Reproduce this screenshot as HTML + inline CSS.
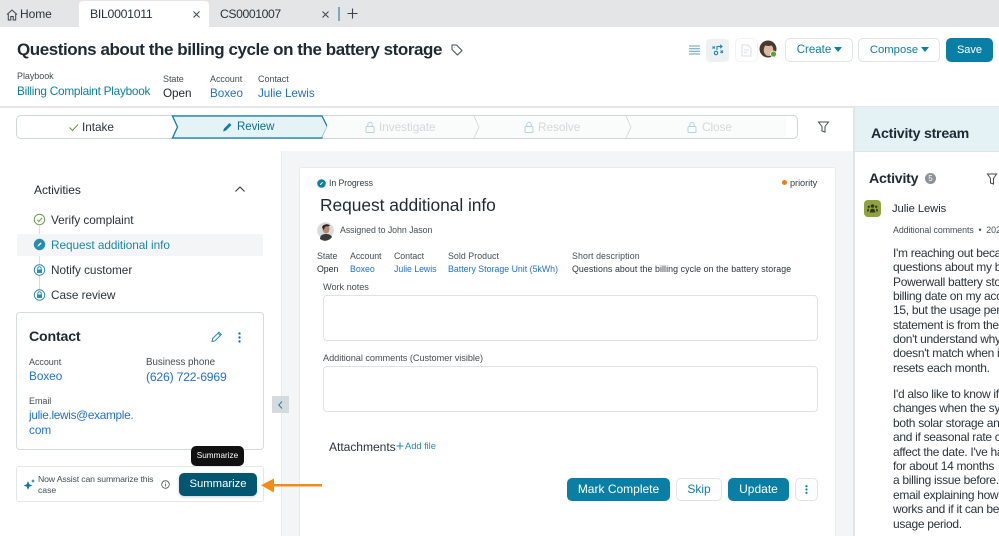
<!DOCTYPE html>
<html><head><meta charset="utf-8"><style>
html,body{margin:0;padding:0}
body{width:999px;height:536px;overflow:hidden;position:relative;background:#fff;font-family:"Liberation Sans",sans-serif;color:#1c2730}
.t{position:absolute;white-space:nowrap;line-height:1;letter-spacing:-.05px}
.b{position:absolute;box-sizing:border-box}
.l{color:#1f6fd6}.te{color:#0a7ea4}.g{color:#444d55}
.btn{position:absolute;box-sizing:border-box;border-radius:5px;text-align:center;white-space:nowrap}
.w{background:#fff;border:1px solid #dfe3e6;color:#0a7ea4}
.f{background:#0a7fa5;color:#fff}
svg{position:absolute;overflow:visible}
</style></head><body>
<div class="b" style="left:0;top:0;width:999px;height:27px;background:#e3e5e7"></div>
<div class="b" style="left:79px;top:1px;width:130px;height:26px;background:#fff;border-radius:4px 4px 0 0"></div>
<svg style="left:6px;top:9px" width="12" height="12" viewBox="0 0 12 12" fill="none" stroke="#3a444c" stroke-width="1"><path d="M1 5.500 6 1l5 4.500M2.300 5v6h2.500V7.500h2.400V11h2.500V5"/></svg>
<div class="t" style="left:20px;top:8px;font-size:12px;color:#2a343c">Home</div>
<div class="t" style="left:90px;top:8px;font-size:12.300px;color:#2a343c;letter-spacing:-.3px">BIL0001011</div>
<svg style="left:192px;top:10px" width="11" height="11" stroke="#3a444c" stroke-width="1"><path d="M1.500 1.500l6 6M7.500 1.500l-6 6"/></svg>
<div class="t" style="left:220px;top:8px;font-size:12.200px;color:#2a343c;letter-spacing:-.4px">CS0001007</div>
<svg style="left:321px;top:10px" width="11" height="11" stroke="#3a444c" stroke-width="1"><path d="M1.500 1.500l6 6M7.500 1.500l-6 6"/></svg>
<div class="b" style="left:338px;top:7px;width:1.500px;height:14px;background:#7fa9bb"></div>
<svg style="left:347px;top:8px" width="12" height="12" stroke="#3a444c" stroke-width="1.100"><path d="M5.500 .5v10M.5 5.500h10"/></svg>

<div class="t" style="left:17px;top:41px;font-size:17px;font-weight:bold;color:#1d2a33;letter-spacing:-.44px">Questions about the billing cycle on the battery storage</div>
<svg style="left:451px;top:44px" width="12" height="12" viewBox="0 0 12 12" fill="none" stroke="#444d55" stroke-width="1"><path d="M1 1h4.500L11 6.500 6.500 11 1 5.500zM3.300 3.300h.4"/></svg>

<div class="t g" style="left:17px;top:72px;font-size:9px">Playbook</div>
<div class="t te" style="left:17px;top:86px;font-size:11.800px;letter-spacing:-.25px">Billing Complaint Playbook</div>
<div class="t g" style="left:163px;top:75px;font-size:9px">State</div>
<div class="t" style="left:163px;top:88px;font-size:11.700px">Open</div>
<div class="t g" style="left:210px;top:75px;font-size:9px">Account</div>
<div class="t l" style="left:210px;top:88px;font-size:11.700px">Boxeo</div>
<div class="t g" style="left:258px;top:75px;font-size:9px">Contact</div>
<div class="t l" style="left:258px;top:88px;font-size:11.700px">Julie Lewis</div>

<svg style="left:689px;top:45px" width="11" height="10" stroke="#5f9fb8" stroke-width="1"><path d="M0 1h11M0 3.700h11M0 6.300h11M0 9h11"/></svg>
<div class="b" style="left:706px;top:39px;width:23px;height:23px;background:#eef1f2;border-radius:4px"></div>
<svg style="left:712px;top:44px" width="12" height="12" viewBox="0 0 12 12" fill="none" stroke="#1a85a8" stroke-width="1.100"><path d="M.5 2.500l2.500 2M3 2.500l-2.500 2M5 6V2.500h4M8 .8l2 1.700-2 1.700M8.500 6.500l2.500 2.500M11 6.500 8.500 9"/><circle cx="4" cy="9" r="1.700"/></svg>
<div class="b" style="left:735px;top:38px;width:23px;height:24px;border:1px solid #f2f3f4;border-radius:5px"></div>
<svg style="left:741px;top:44px" width="12" height="13" viewBox="0 0 12 13" fill="none" stroke="#e0e3e5" stroke-width="1.200"><path d="M1 1h6l3 3v8H1zM3 6h5M3 8.500h3"/></svg>
<svg style="left:759px;top:40px" width="20" height="20" viewBox="0 0 20 20"><circle cx="9" cy="9" r="8.500" fill="#4a392e"/><ellipse cx="9.500" cy="10" rx="4.800" ry="6" fill="#dcb9a2"/><path d="M4.500 6c2-3.500 8-3.500 10 0-2-1-3 0-5 0S6.500 5 4.500 6z" fill="#4a3527"/><circle cx="14.500" cy="14" r="3" fill="#56a82a" stroke="#fff" stroke-width=".8"/></svg>
<div class="btn w" style="left:785px;top:38px;width:68px;height:24px;font-size:11.500px;line-height:22px;padding-right:10px">Create</div>
<svg style="left:834px;top:47px" width="8" height="5"><path d="M0 0h8L4 5z" fill="#0a7ea4"/></svg>
<div class="btn w" style="left:858px;top:38px;width:82px;height:24px;font-size:11.300px;line-height:22px;padding-right:10px">Compose</div>
<svg style="left:921px;top:47px" width="8" height="5"><path d="M0 0h8L4 5z" fill="#0a7ea4"/></svg>
<div class="btn f" style="left:946px;top:38px;width:47px;height:24px;font-size:11px;line-height:24px">Save</div>

<div class="b" style="left:0;top:106px;width:999px;height:1.500px;background:#e4e6e8"></div>

<div class="b" style="left:16px;top:115px;width:782px;height:24px;background:#fff;border:1.500px solid #cfd4d7;border-radius:5px"></div>
<svg style="left:0;top:0" width="999" height="145" fill="none">
<path d="M172.500 116 H322 L327.500 127 L322 138 H172.500 L177.500 127Z" fill="#e5f2f6" stroke="#0f7ea3" stroke-width="1.300"/>
<path d="M328 116.500h146l5 10.500-5 10.500H322l5-10.500z" fill="#fafbfb" stroke="none"/>
<path d="M479 116.500H626l5 10.500-5 10.500H474l5-10.500z" fill="#fafbfb"/>
<path d="M631 116.500H786v21H626l5-10.500z" fill="#fafbfb"/>
<path d="M474 116l5 11-5 11M626 116l5 11-5 11" stroke="#d9dcdf" stroke-width="1"/>
<path d="M69.500 127.500l3 3 5.500-6" stroke="#5d9a3c" stroke-width="1"/>
<path d="M223 131.500l1-3 5.500-5.500 2 2-5.500 5.500z" fill="#0f7ea3"/>
<g stroke="#b4d3e0" stroke-width="1"><rect x="366" y="126.500" width="8" height="6" rx="1"/><path d="M367.800 126.500v-2a2.200 2.200 0 0 1 4.400 0v2"/><rect x="525" y="126.500" width="8" height="6" rx="1"/><path d="M526.800 126.500v-2a2.200 2.200 0 0 1 4.400 0v2"/><rect x="688" y="126.500" width="8" height="6" rx="1"/><path d="M689.800 126.500v-2a2.200 2.200 0 0 1 4.400 0v2"/></g>
</svg>
<div class="t" style="left:82px;top:121.500px;font-size:11.800px;color:#2a343c">Intake</div>
<div class="t" style="left:237px;top:121.500px;font-size:11.500px;color:#0c6f90">Review</div>
<div class="t" style="left:379px;top:121.500px;font-size:11.800px;color:#d4d8da">Investigate</div>
<div class="t" style="left:538px;top:121.500px;font-size:11.800px;color:#d4d8da">Resolve</div>
<div class="t" style="left:702px;top:121.500px;font-size:11.800px;color:#d4d8da">Close</div>
<svg style="left:818px;top:121px" width="11" height="12" fill="none" stroke="#444d55" stroke-width="1"><path d="M.5 1h10L7 5.500v5.500L4 10V5.500z"/></svg>

<div class="b" style="left:281px;top:151px;width:573px;height:385px;background:#f4f5f7;border-left:1px solid #e8eaec"></div>
<div class="b" style="left:854px;top:107px;width:145px;height:44.500px;background:#e4f1f5;border-left:1px solid #dfe3e6;border-bottom:1px solid #dfe3e6"></div>
<div class="b" style="left:853px;top:107px;width:1.500px;height:429px;background:#e2e4e6"></div>
<div class="b" style="left:299px;top:167px;width:537px;height:369px;background:#fff;border:1px solid #e8eaec;border-bottom:none;border-radius:3px 3px 0 0"></div>
<div class="t" style="left:871px;top:127px;font-size:14.200px;font-weight:bold;color:#1d2a33;letter-spacing:-.25px">Activity stream</div>

<div class="t" style="left:34px;top:184px;font-size:12px;color:#1d2a33">Activities</div>
<svg style="left:235px;top:186px" width="10" height="6" fill="none" stroke="#333" stroke-width="1"><path d="M.5 5.500l4.500-4.500 4.500 4.500"/></svg>
<div class="b" style="left:39px;top:226px;width:1px;height:66px;background:#d8dcdf"></div>
<div class="b" style="left:17px;top:234px;width:246px;height:22px;background:#f3f5f7"></div>
<svg style="left:33px;top:213px" width="14" height="90" fill="none">
<circle cx="6.500" cy="6.500" r="5.200" fill="#fff" stroke="#6d9a4b" stroke-width="1"/><path d="M4 6.700l1.800 1.800 3.300-3.500" stroke="#6d9a4b"/>
<circle cx="6.500" cy="31.500" r="5.700" fill="#2a8cb0"/><path d="M4.500 33.500l.5-1.500 2.500-2.500 1 1-2.500 2.500z" fill="#fff"/>
<circle cx="6.500" cy="57" r="5.200" fill="#fff" stroke="#2a8cb0"/><rect x="4" y="56.500" width="5" height="3.500" rx=".5" fill="#2a8cb0"/><path d="M4.800 56.500v-1a1.700 1.700 0 0 1 3.400 0v1" stroke="#2a8cb0"/>
<circle cx="6.500" cy="82" r="5.200" fill="#fff" stroke="#2a8cb0"/><rect x="4" y="81.500" width="5" height="3.500" rx=".5" fill="#2a8cb0"/><path d="M4.800 81.500v-1a1.700 1.700 0 0 1 3.400 0v1" stroke="#2a8cb0"/>
</svg>
<div class="t" style="left:51px;top:214.500px;font-size:11.800px;color:#2a343c">Verify complaint</div>
<div class="t" style="left:51px;top:239.500px;font-size:11.800px;color:#1e86ab">Request additional info</div>
<div class="t" style="left:51px;top:265px;font-size:11.800px;color:#2a343c">Notify customer</div>
<div class="t" style="left:51px;top:290px;font-size:11.800px;color:#2a343c">Case review</div>

<div class="b" style="left:16px;top:312px;width:248px;height:138px;background:#fff;border:1.500px solid #d5dadd;border-radius:4px"></div>
<div class="t" style="left:29px;top:329.500px;font-size:14.200px;font-weight:bold;color:#1d2a33;letter-spacing:-.2px">Contact</div>
<svg style="left:211px;top:331px" width="12" height="12" fill="none" stroke="#2088ad" stroke-width="1"><path d="M1 10.500l.7-3L8 1.200l2.300 2.300L4 9.800zM7 2.200l2.300 2.300"/></svg>
<svg style="left:238px;top:332px" width="4" height="11" fill="#0a7ea4"><circle cx="1.500" cy="1.500" r="1.200"/><circle cx="1.500" cy="5.500" r="1.200"/><circle cx="1.500" cy="9.500" r="1.200"/></svg>
<div class="t g" style="left:29px;top:358px;font-size:9px">Account</div>
<div class="t l" style="left:29px;top:370.500px;font-size:11.800px">Boxeo</div>
<div class="t g" style="left:146px;top:358px;font-size:9.800px">Business phone</div>
<div class="t l" style="left:146px;top:370.500px;font-size:12.200px;letter-spacing:-.2px">(626) 722-6969</div>
<div class="t g" style="left:29px;top:396.500px;font-size:9px">Email</div>
<div class="t l" style="left:29px;top:409.500px;font-size:11.800px;letter-spacing:-.3px">julie.lewis@example.</div>
<div class="t l" style="left:29px;top:424.500px;font-size:11.800px">com</div>

<div class="b" style="left:16px;top:466px;width:248px;height:36px;background:#fff;border:1px solid #e3e6e8;border-radius:3px"></div>
<svg style="left:24px;top:479px" width="11" height="11" fill="#0b7b9f"><path d="M4 2l1.300 3.200L8.500 6.500 5.300 7.800 4 11 2.700 7.800-.5 6.500l3.200-1.300zM9 0l.6 1.400L11 2l-1.400.6L9 4l-.6-1.400L7 2l1.400-.6z"/></svg>
<div class="t g" style="left:38px;top:474.500px;font-size:8.700px;letter-spacing:-.15px">Now Assist can summarize this</div>
<div class="t g" style="left:38px;top:485.500px;font-size:8.700px">case</div>
<svg style="left:161px;top:480px" width="9" height="9" fill="none" stroke="#444d55" stroke-width=".8"><circle cx="4.500" cy="4.500" r="3.800"/><path d="M4.500 4v2.500M4.500 2.400v.8"/></svg>
<div class="btn" style="left:179px;top:472.500px;width:78px;height:23px;background:#03566f;color:#fff;font-size:11.300px;line-height:23px;box-shadow:0 1px 3px rgba(0,0,0,.2)">Summarize</div>
<div class="btn" style="left:191px;top:446px;width:53px;height:20px;background:#111;color:#fff;font-size:8.200px;line-height:19px">Summarize</div>
<svg style="left:260px;top:478px" width="62" height="15"><path d="M14 6h48v2.500H14z" fill="#f28c16"/><path d="M1 7.300 14 .5v14z" fill="#f28c16"/></svg>
<div class="b" style="left:272px;top:396px;width:17px;height:17px;background:#d4dadd"></div>
<svg style="left:278px;top:401px" width="5" height="8" fill="none" stroke="#1f7fa3" stroke-width="1"><path d="M4 .5.800 4 4 7.500"/></svg>

<svg style="left:317px;top:179px" width="9" height="9"><circle cx="4.500" cy="4.500" r="4.300" fill="#0a7ea4"/><path d="M2.800 6.200l.4-1.200 2-2 .8.800-2 2z" fill="#fff"/></svg>
<div class="t" style="left:329px;top:179px;font-size:8.800px;color:#333c44;letter-spacing:-.1px">In Progress</div>
<div class="b" style="left:782px;top:180px;width:5px;height:5px;border-radius:50%;background:#e8801a"></div>
<div class="t" style="left:790px;top:179px;font-size:9.200px;color:#333c44">priority</div>
<div class="t" style="left:320px;top:197px;font-size:17.400px;color:#1d2a33;letter-spacing:-.05px">Request additional info</div>
<svg style="left:317px;top:222px" width="18" height="18" viewBox="0 0 18 18"><circle cx="8.500" cy="8.500" r="8.300" fill="#d9dcdf"/><path d="M3 17c0-4 3-5 6-5s5 1 6 3a8.300 8.300 0 0 1-12 2z" fill="#3a3a3a"/><ellipse cx="9" cy="7" rx="3.500" ry="4.500" fill="#b58a70"/><path d="M5 5c1-3 7-4 8-1-2 0-3 1-4 0-1 1-2 3-2.500 4z" fill="#2c2421"/></svg>
<div class="t g" style="left:340px;top:226px;font-size:8.800px">Assigned to John Jason</div>

<div class="t g" style="left:317px;top:252px;font-size:8.800px">State</div>
<div class="t" style="left:317px;top:265px;font-size:8.800px">Open</div>
<div class="t g" style="left:350px;top:252px;font-size:8.800px">Account</div>
<div class="t l" style="left:350px;top:265px;font-size:8.800px">Boxeo</div>
<div class="t g" style="left:394px;top:252px;font-size:8.800px">Contact</div>
<div class="t l" style="left:394px;top:265px;font-size:8.800px">Julie Lewis</div>
<div class="t g" style="left:448px;top:252px;font-size:8.800px;letter-spacing:.05px">Sold Product</div>
<div class="t l" style="left:448px;top:265px;font-size:8.800px;letter-spacing:0">Battery Storage Unit (5kWh)</div>
<div class="t g" style="left:572px;top:252px;font-size:8.800px;letter-spacing:.1px">Short description</div>
<div class="t" style="left:572px;top:265px;font-size:8.800px;color:#2a343c;letter-spacing:.09px">Questions about the billing cycle on the battery storage</div>

<div class="t g" style="left:323px;top:283px;font-size:9.200px">Work notes</div>
<div class="b" style="left:323px;top:295px;width:495px;height:46px;border:1px solid #dfe3e6;border-radius:4px"></div>
<div class="t g" style="left:323px;top:353.500px;font-size:9.200px">Additional comments (Customer visible)</div>
<div class="b" style="left:323px;top:366px;width:495px;height:46px;border:1px solid #dfe3e6;border-radius:4px"></div>
<div class="t" style="left:329px;top:441px;font-size:12.100px;color:#2a343c">Attachments</div>
<svg style="left:396px;top:442px" width="8" height="8" stroke="#2088ad" stroke-width="1"><path d="M4 .5v7M.5 4h7"/></svg>
<div class="t" style="left:405px;top:441px;font-size:9.400px;color:#2088ad">Add file</div>

<div class="btn f" style="left:567px;top:478px;width:103px;height:23px;font-size:12px;line-height:23px">Mark Complete</div>
<div class="btn w" style="left:676px;top:478px;width:46px;height:23px;font-size:12px;line-height:21px">Skip</div>
<div class="btn f" style="left:728px;top:478px;width:61px;height:23px;font-size:12px;line-height:23px">Update</div>
<div class="btn w" style="left:795px;top:478px;width:23px;height:23px"></div>
<svg style="left:805px;top:485px" width="4" height="10" fill="#0a7ea4"><circle cx="1.500" cy="1.200" r="1.100"/><circle cx="1.500" cy="4.500" r="1.100"/><circle cx="1.500" cy="7.800" r="1.100"/></svg>

<div class="t" style="left:869px;top:172px;font-size:14.200px;font-weight:bold;color:#1d2a33;letter-spacing:-.25px">Activity</div>
<div class="b" style="left:925px;top:173px;width:11px;height:11px;border-radius:50%;background:#8d9296;color:#fff;font-size:8px;line-height:11px;text-align:center">5</div>
<svg style="left:987px;top:173px" width="11" height="12" fill="none" stroke="#444d55" stroke-width="1"><path d="M.5 1h9L6.500 5.500v5.500L3.500 10V5.500z"/></svg>
<div class="b" style="left:864px;top:200px;width:17px;height:17px;background:#8ea33d;border-radius:4px"></div>
<svg style="left:867px;top:204px" width="11" height="9" fill="#2f3a1c"><circle cx="5.500" cy="2" r="1.800"/><circle cx="1.800" cy="2.800" r="1.200"/><circle cx="9.200" cy="2.800" r="1.200"/><path d="M2.800 8.500c0-2.500 1-3.800 2.700-3.800s2.700 1.300 2.700 3.800zM0 7.500c0-2 .6-3 1.800-3v3zM11 7.500c0-2-.6-3-1.800-3v3z"/></svg>
<div class="t" style="left:892px;top:203.500px;font-size:11.200px;color:#1d2a33">Julie Lewis</div>
<div class="t g" style="left:893px;top:226px;font-size:8.800px">Additional comments &nbsp;•&nbsp; 2025</div>

<div style="position:absolute;left:893px;top:246px;font-size:12px;line-height:14.350px;white-space:nowrap;color:#2a343c;letter-spacing:-.3px">
I'm reaching out because<br>questions about my bill<br>Powerwall battery storage<br>billing date on my account<br>15, but the usage period<br>statement is from the<br>don't understand why<br>doesn't match when it<br>resets each month.</div>
<div style="position:absolute;left:893px;top:387px;font-size:12px;line-height:14.400px;white-space:nowrap;color:#2a343c;letter-spacing:-.3px">
I'd also like to know if it<br>changes when the system<br>both solar storage and<br>and if seasonal rate can<br>affect the date. I've had<br>for about 14 months<br>a billing issue before.<br>email explaining how<br>works and if it can be<br>usage period.</div>
</body></html>
